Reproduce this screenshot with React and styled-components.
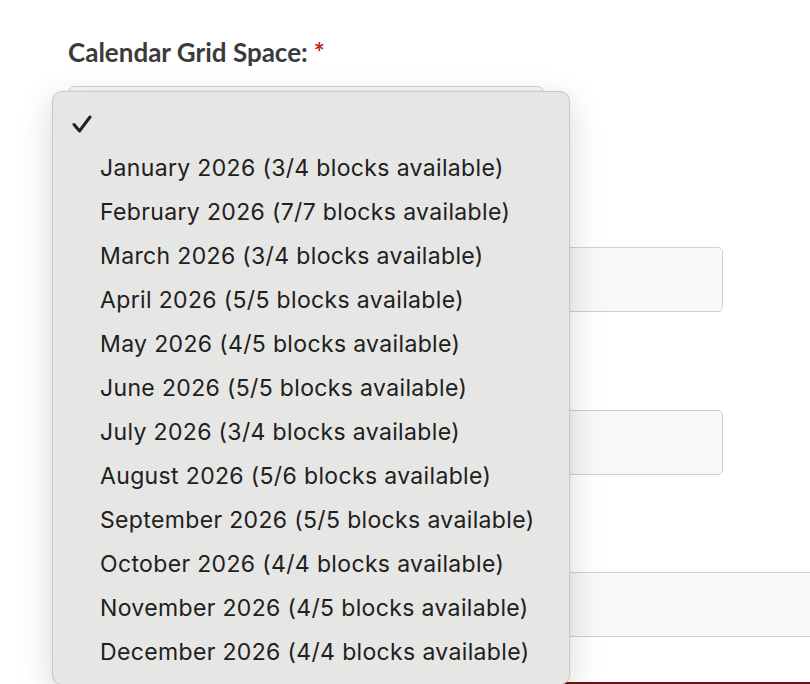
import React from 'react';
import styled, { createGlobalStyle } from 'styled-components';

const GlobalStyle = createGlobalStyle`
  html, body {
    margin: 0;
    padding: 0;
    background: #ffffff;
    overflow: hidden;
  }
  body {
    font-family: Lato, "Open Sans", sans-serif;
  }
`;

const Page = styled.div`
  position: relative;
  width: 810px;
  height: 684px;
  overflow: hidden;
`;

const Form = styled.form`
  padding: 37px 0 0 68px;
  display: flex;
  flex-direction: column;
`;

const Field = styled.div`
  display: flex;
  flex-direction: column;
  margin-bottom: ${(p) => p.gap || 50}px;
`;

const Label = styled.label`
  font-family: Lato, sans-serif;
  font-weight: 700;
  font-size: 26px;
  line-height: 30px;
  height: 30px;
  color: #3b3b3b;
  margin-bottom: 19px;
`;

const Required = styled.span`
  color: #c4271b;
  margin-left: 6px;
`;

const Box = styled.div`
  box-sizing: border-box;
  width: ${(p) => p.w}px;
  height: 65px;
  background: #f8f8f8;
  border: 1px solid #d0d0d0;
  border-radius: ${(p) => p.r || 5}px;
`;

const SubmitBar = styled.div`
  width: 300px;
  height: 40px;
  margin-left: 490px;
  background: #6e1212;
`;

const Menu = styled.div`
  position: absolute;
  left: 52px;
  top: 91px;
  width: 518px;
  box-sizing: border-box;
  padding: 10px 0;
  background: #e6e6e5;
  border: 1px solid #c9c9c9;
  border-radius: 10px;
  box-shadow: 0 10px 34px rgba(0, 0, 0, 0.16), 0 0 2px rgba(0, 0, 0, 0.08);
`;

const Option = styled.div`
  display: flex;
  align-items: center;
  height: 44px;
  font-family: Inter, "Liberation Sans", sans-serif;
  font-size: 23px;
  letter-spacing: 0.35px;
  color: #202020;
  white-space: nowrap;
`;

const CheckSlot = styled.span`
  width: 47px;
  display: flex;
  justify-content: flex-end;
  padding-right: 8px;
  box-sizing: border-box;
`;

const months = [
  'January 2026 (3/4 blocks available)',
  'February 2026 (7/7 blocks available)',
  'March 2026 (3/4 blocks available)',
  'April 2026 (5/5 blocks available)',
  'May 2026 (4/5 blocks available)',
  'June 2026 (5/5 blocks available)',
  'July 2026 (3/4 blocks available)',
  'August 2026 (5/6 blocks available)',
  'September 2026 (5/5 blocks available)',
  'October 2026 (4/4 blocks available)',
  'November 2026 (4/5 blocks available)',
  'December 2026 (4/4 blocks available)',
];

function Check() {
  return (
    <svg width="20" height="20" viewBox="0 0 20 20">
      <polyline
        points="2,10.5 7.5,17 18,3"
        fill="none"
        stroke="#222"
        strokeWidth="3"
        strokeLinecap="round"
        strokeLinejoin="round"
      />
    </svg>
  );
}

export default function App() {
  return (
    <Page>
      <GlobalStyle />
      <Form>
        <Field gap={47}>
          <Label>
            Calendar Grid Space:<Required>*</Required>
          </Label>
          <Box w={476} r={7} />
        </Field>
        {/* labels of these fields sit under the open menu */}
        <Field gap={49}>
          <Label />
          <Box w={655} />
        </Field>
        <Field gap={48}>
          <Label />
          <Box w={655} />
        </Field>
        <Field gap={45}>
          <Label />
          <Box w={780} />
        </Field>
        <SubmitBar />
      </Form>
      <Menu>
        <Option>
          <CheckSlot>
            <Check />
          </CheckSlot>
        </Option>
        {months.map((m) => (
          <Option key={m}>
            <CheckSlot />
            {m}
          </Option>
        ))}
      </Menu>
    </Page>
  );
}
